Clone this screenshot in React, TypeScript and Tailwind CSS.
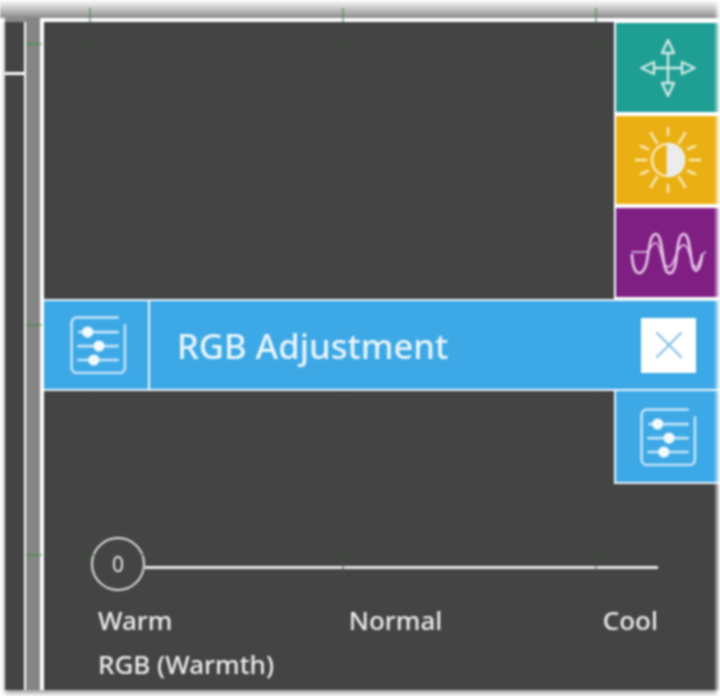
const font = { fontFamily: '"Noto Sans", "Open Sans", sans-serif' };

function Sliders({ className }: { className?: string }) {
  return (
    <svg viewBox="0 0 56 56" className={className} fill="none" stroke="#c6e6f9" strokeLinecap="round">
      <path d="M47 1.5H7.5a5 5 0 0 0-5 5V50a5 5 0 0 0 5 5H49a5 5 0 0 0 5-5V9" strokeWidth="2.4" />
      <path d="M10 15.5H47M9 29H47M9 42.5H47" strokeWidth="2.6" />
      <circle cx="18" cy="15.5" r="5.4" fill="#f2fafe" stroke="none" />
      <circle cx="29" cy="29" r="5.4" fill="#f2fafe" stroke="none" />
      <circle cx="24" cy="42.5" r="5.4" fill="#f2fafe" stroke="none" />
    </svg>
  );
}

function Move() {
  return (
    <svg viewBox="0 0 56 60" className="w-[56px] h-[60px]" fill="none" stroke="#cdeae7" strokeWidth="2.4" strokeLinejoin="round">
      <path d="M28 14V46M14 30H42" />
      <path d="M28 2L34 15H22Z" />
      <path d="M28 58L34 45H22Z" />
      <path d="M1.5 30L14 24V36Z" />
      <path d="M54.5 30L42 24V36Z" />
    </svg>
  );
}

function Sun() {
  return (
    <svg viewBox="0 0 68 68" className="w-[68px] h-[68px]" fill="none" stroke="#f9e6ad" strokeWidth="2.6" strokeLinecap="round">
      <circle cx="34" cy="34" r="16" />
      <path d="M34 18a16 16 0 0 1 0 32Z" fill="#ececec" stroke="#ececec" />
      <path d="M34 2V9M34 59V66M2 34H12M56 34H66M17 7L23 17M51 7L45 17M17 61L23 51M51 61L45 51M7 20L14 23M61 20L54 23M7 48L14 45M61 48L54 45" />
    </svg>
  );
}

function Wave() {
  return (
    <svg viewBox="0 0 76 48" className="w-[76px] h-[48px] mt-[4px]" fill="none" stroke="#e9c8ea" strokeWidth="2.6" strokeLinecap="round">
      <path d="M2 24C3 48 14 46 17 30C20 10 21 3 26 3C31 3 32 20 34 32C36 46 44 46 46 30C48 12 49 3 54 3C59 3 60 20 62 32C64 44 70 42 72 24" />
      <path d="M2 21H16C20 21 21 12 26 12C31 12 31 36 38 36C45 36 46 14 54 14C60 14 60 36 66 36C70 36 70 21 76 21" strokeWidth="1.4" />
    </svg>
  );
}

function SideButton({ color, children, h }: { color: string; children: React.ReactNode; h: string }) {
  return <div className={`${color} ${h} flex items-center justify-center border-l-2 border-white`}>{children}</div>;
}

export default function App() {
  return (
    <div style={font} className="relative w-[720px] h-[696px] overflow-hidden bg-white text-[#ececec] blur-[0.8px]">
      <div className="h-[18px] bg-gradient-to-b from-white to-[#8c8c8c]" />
      <div className="flex h-[672px] ml-[5px] bg-[#444444] shadow-[0_3px_5px_rgba(0,0,0,0.4)]">
        {/* left panels */}
        <div className="w-[21px] flex flex-col">
          <div className="h-[4px] bg-[#8c8c8c]" />
          <div className="h-[53px] bg-[#444444] border-r-2 border-b-[3px] border-white" />
          <div className="flex-1 bg-[#444444] border-r-2 border-white" />
        </div>
        <div className="w-[14px] bg-[#858585]" />
        {/* main panel */}
        <div className="flex-1 flex flex-col border-l-[4px] border-white border-t-[4px]">
          <div className="flex h-[277px]">
            <div className="flex-1" />
            <div className="w-[106px] flex flex-col gap-[4px] bg-white pt-[1px]">
              <SideButton color="bg-[#1f9e94]" h="h-[89px]"><Move /></SideButton>
              <SideButton color="bg-[#eab013]" h="h-[88px]"><Sun /></SideButton>
              <SideButton color="bg-[#7f1f84]" h="h-[89px]"><Wave /></SideButton>
            </div>
          </div>
          <div className="h-[92px] flex items-center bg-[#3da8e6] border-y-2 border-[#eaf5fb]">
            <div className="w-[106px] h-full flex items-center justify-center border-r-2 border-[#eaf5fb]">
              <Sliders className="w-[58px] h-[58px] ml-[3px]" />
            </div>
            <div className="flex-1 pl-[27px] pt-[2px] text-[34.6px] font-medium leading-none text-[#e8f5fc]">RGB Adjustment</div>
            <div className="w-[55px] h-[55px] mr-[24px] bg-white flex items-center justify-center">
              <svg viewBox="0 0 28 28" className="w-[28px] h-[28px]" stroke="#8cc4ea" strokeWidth="2.4" strokeLinecap="round">
                <path d="M2 2L26 26M26 2L2 26" />
              </svg>
            </div>
          </div>
          <div className="flex-1 flex flex-col">
            <div className="flex justify-end">
              <div className="w-[106px] h-[93px] bg-[#3da8e6] border-l-2 border-b-2 border-[#eaf5fb] flex items-center justify-center">
                <Sliders className="w-[58px] h-[58px]" />
              </div>
            </div>
            <div className="pl-[47px] pr-[62px] pt-[53px]">
              <div className="flex items-center">
                <div className="w-[54px] h-[54px] shrink-0 rounded-full border-2 border-[#e2e2e2] flex items-center justify-center text-[21px] leading-none">0</div>
                <div className="flex-1 h-[2.5px] bg-[#e6e6e6] mt-[7px]" />
              </div>
              <div className="flex justify-between pl-[7px] pt-[13px] text-[26px] font-medium leading-[32px]">
                <span>Warm</span>
                <span className="ml-[16px]">Normal</span>
                <span>Cool</span>
              </div>
              <div className="pl-[7px] pt-[12px] text-[26px] font-medium leading-[32px]">RGB (Warmth)</div>
            </div>
          </div>
        </div>
      </div>
      {/* alignment guides lying over the panels */}
      <svg className="absolute inset-0 pointer-events-none" width="720" height="696" fill="none" strokeWidth="1">
        <path d="M90 20V296M90 392V688M343 20V296M343 392V688M596 20V296M596 392V688M44 44H614M44 555H614" stroke="#3d4f3d" />
        <path d="M90 8V20M343 8V20M596 8V20M26 44H42M26 325H42M26 555H42" stroke="#2f8f3a" />
      </svg>
      <div className="absolute top-0 right-0 bottom-0 w-[6px] bg-gradient-to-r from-transparent to-white" />
    </div>
  );
}
